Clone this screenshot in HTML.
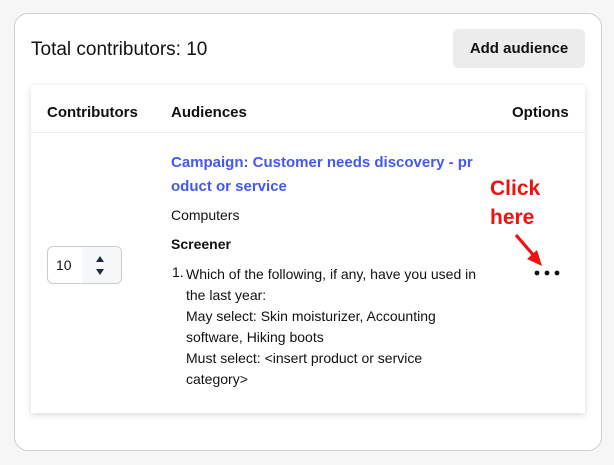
<!DOCTYPE html>
<html><head><meta charset="utf-8"><style>
*{margin:0;padding:0;box-sizing:border-box}
body{width:614px;height:465px;background:#f6f6f6;font-family:"Liberation Sans",sans-serif;color:#111;position:relative;overflow:hidden}
.outer{position:absolute;left:14px;top:13px;width:588px;height:438px;background:#fff;border:1px solid #cfcfcf;border-radius:14px}
.a{position:absolute;white-space:nowrap}
.btn{position:absolute;left:453px;top:29px;width:132px;height:39px;background:#ececec;border-radius:5px;font-weight:bold;font-size:15px;text-align:center;line-height:39px}
.inner{position:absolute;left:31px;top:85px;width:554px;height:328px;background:#fff;box-shadow:0 2px 6px rgba(0,0,0,.15)}
.th{font-weight:bold;font-size:15px}
.link{color:#4458ee;font-weight:bold;font-size:15px}
.t{font-size:14px}
</style></head><body>
<div class="outer"></div>
<div class="a" style="left:31px;top:39px;font-size:19px">Total contributors: 10</div>
<div class="btn">Add audience</div>
<div class="inner"></div>
<div class="a" style="left:31px;top:132px;width:554px;height:1px;background:#ececec"></div>
<div class="a th" style="left:47px;top:104px">Contributors</div>
<div class="a th" style="left:171px;top:104px">Audiences</div>
<div class="a th" style="left:512px;top:104px">Options</div>
<div class="a link" style="left:171px;top:154px">Campaign: Customer needs discovery - pr</div>
<div class="a link" style="left:171px;top:178px">oduct or service</div>
<div class="a t" style="left:171px;top:207px">Computers</div>
<div class="a t" style="left:171px;top:236px;font-weight:bold">Screener</div>
<div class="a t" style="left:172px;top:264px">1.</div>
<div class="a t" style="left:186px;top:264px;line-height:21px">Which of the following, if any, have you used in<br>the last year:<br>May select: Skin moisturizer, Accounting<br>software, Hiking boots<br>Must select: &lt;insert product or service<br>category&gt;</div>
<div class="a" style="left:47px;top:246px;width:75px;height:38px;border:1px solid #ccc;border-radius:6px;overflow:hidden">
<div style="position:absolute;left:34px;top:0;width:41px;height:38px;background:#f6f7f9"></div>
<div style="position:absolute;left:8px;top:10px;font-size:14px">10</div>
<svg style="position:absolute;left:46px;top:7px" width="12" height="24" viewBox="0 0 12 24"><path d="M2 8 L6 2 L10 8Z M2 15 L6 21 L10 15Z" fill="#1e2a40"/></svg>
</div>
<div class="a" style="left:490px;top:174px;color:#ee1111;font-weight:bold;font-size:21px;line-height:29px">Click<br>here</div>
<svg class="a" style="left:505px;top:228px" width="60" height="55" viewBox="0 0 60 55">
<path d="M11 7 L30 29" stroke="#ee1111" stroke-width="3.2" fill="none"/>
<path d="M37 38 L22 31 L32 22Z" fill="#ee1111"/>
<circle cx="32" cy="45" r="2.4" fill="#111"/><circle cx="42" cy="45" r="2.4" fill="#111"/><circle cx="52" cy="45" r="2.4" fill="#111"/>
</svg>
</body></html>
